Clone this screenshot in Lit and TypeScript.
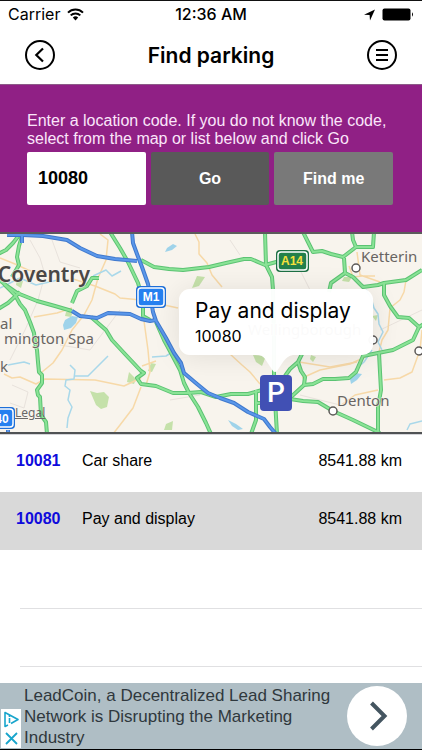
import { LitElement, html, svg, css } from "lit";
import { customElement, state } from "lit/decorators.js";
import { classMap } from "lit/directives/class-map.js";

interface Place {
  code: string;
  name: string;
  distance: string;
}

const PLACES: Place[] = [
  { code: "10081", name: "Car share", distance: "8541.88 km" },
  { code: "10080", name: "Pay and display", distance: "8541.88 km" },
];

const A_ROADS = [
  "M20 234L13 243L6 250L-2 254",
  "M22 236L19 246L17 257L19 265L12 277",
  "M-2 279L7 286L17 293L37 301L55 306L72 311",
  "M-2 309L8 303L20 292",
  "M4 284L15 295L20 304L25 310L30 322L34 333L35 343L37 350L38 362L39 372L42 375L42 383L37 390L38 395L40 397L41 415L46 422L47 434",
  "M72 303L77 291L87 286L92 278L99 278",
  "M91 317L106 330L112 340L125 354L141 371L144 373L137 378L141 384L156 386L173 393L188 393L201 392L216 397L231 394L248 394L262 390",
  "M110 232L120 248L128 262L138 283L143 300L143 316L150 320",
  "M156 322L164 340L171 353L180 370L184 383L189 393L198 407L206 423L211 434",
  "M141 260L154 267L169 269L183 270L209 267L226 263L244 259L251 259L265 265L280 261",
  "M265 232L266 265L272 277L273 290L274 340L274 380L276 417L277 434",
  "M256 390L256 420L251 434",
  "M256 403H266",
  "M303 232L308 242L313 252L322 251L331 254L343 257L356 247L373 247L374 232",
  "M352 232L353 240L356 247",
  "M344 258L345 273L331 283L329 292",
  "M345 273L353 277L363 287L378 285L384 283L406 280L422 270",
  "M384 283L384 295L390 306L398 317L409 318L419 327L424 324",
  "M419 327L413 340L405 344L393 350L378 353L363 356L356 372L349 378L335 379L323 379L313 384L304 385L291 397",
  "M379 353L380 372L381 390L378 407L378 434",
  "M290 399L303 401L318 402L333 411L353 420L380 433",
  "M285 376L290 369L298 362L302 354",
  "M298 362L301 371L305 377L304 385",
];

const MOTORWAYS = [
  "M7 235L23 235L43 236L67 240L80 248L97 256L115 259L137 261",
  "M22 233V243",
  "M132 232L133 243L137 254L142 267L148 284L151 300L153 312L156 321L166 338L174 353L181 363L184 373L197 384L208 393L220 398L234 403L248 412L264 419L270 427L276 434",
  "M72 311L80 316L97 318L108 313L130 314L141 319L150 321L156 320",
  "M8 430V434",
];

const B_ROADS = [
  "M100 234L108 240L106 260L98 278L92 300L84 315L72 330L62 350L53 363L42 372",
  "M70 278L95 286L115 294L120 298L141 300L178 308",
  "M34 317L57 313L72 308",
  "M4 374L12 378L20 377L36 384L45 379L95 380L124 386L141 378",
  "M113 434L120 425L133 408L141 387",
  "M195 234L199 242L199 254L207 263L212 275L222 287",
  "M144 321L148 350L150 372L146 385M142 366L156 361",
  "M230 354L242 365L250 372L260 384",
  "M349 266L353 277L362 276L375 276M357 252L360 275L380 282",
  "M406 280L404 292L400 300L390 308L388 330L382 340L379 352",
  "M302 378L320 370L350 364L372 354",
  "M299 362L330 367L357 362",
  "M422 330L420 350L412 372L400 378L384 380",
  "M340 406L355 395L378 390",
  "M0 258L15 264L28 270L45 275",
];

const RIVERS = [
  "M0 288L8 284L20 278L36 285L58 280",
  "M93 276L106 270L112 276L121 271",
  "M8 365L24 362L30 364",
  "M70 365L75 370L74 379L66 380L65 386L70 390L68 400L72 407L68 418L67 428",
  "M75 376L88 376L96 368L108 356",
  "M152 357L166 356L174 351",
  "M366 290L371 298L374 308L378 314L379 324L383 332L378 342L382 350",
  "M372 350L364 362L355 370",
  "M407 430L410 424L422 421",
];

@customElement("app-root")
export class AppRoot extends LitElement {
  @state() private selected = "10080";

  static styles = css`
    :host {
      display: flex;
      flex-direction: column;
      box-sizing: border-box;
      min-height: 100vh;
      background: #fff;
      border-top: 1px solid #111;
      border-bottom: 1px solid #000;
      font-family: "Liberation Sans", Arial, sans-serif;
      font-size: 16px;
      color: #000;
    }
    svg {
      display: block;
    }
    button {
      border: 0;
      padding: 0;
      font: inherit;
      background: none;
      color: inherit;
    }
    .status {
      display: grid;
      grid-template-columns: 1fr auto 1fr;
      align-items: center;
      height: 27px;
      padding: 0 8px;
      font: 500 16px/27px Inter, "Liberation Sans", sans-serif;
    }
    .carrier,
    .power {
      display: flex;
      align-items: center;
      gap: 7px;
    }
    .carrier {
      font-weight: 400;
    }
    .power {
      justify-content: flex-end;
    }
    .bar {
      display: flex;
      align-items: center;
      justify-content: space-between;
      height: 56px;
      padding: 0 24px;
      border-bottom: 1px solid #8d5a88;
    }
    h1 {
      margin: 0;
      font: 600 21px/28px Inter, "Liberation Sans", sans-serif;
    }
    .finder {
      padding: 27px 29px 27px 27px;
      background: #902085;
      color: #fbe6fa;
    }
    .finder label {
      display: block;
      margin-bottom: 4px;
      line-height: 18px;
    }
    .fields {
      display: grid;
      grid-template-columns: repeat(3, 1fr);
      gap: 5px;
    }
    .fields > * {
      box-sizing: border-box;
      width: 100%;
      height: 53px;
      border: 0;
      border-radius: 2px;
      font: bold 16px/20px "Liberation Sans", Arial, sans-serif;
      color: #fff;
    }
    .fields .code {
      padding: 0 11px;
      font-size: 18px;
      background: #fff;
      color: #000;
    }
    .go {
      background: #595959;
    }
    .near {
      background: #797979;
    }
    .map {
      position: relative;
      height: 198px;
      border-top: 2px solid #5c5c5c;
      border-bottom: 2px solid #505254;
      background: #f8f4ed;
    }
    .chart {
      width: 100%;
      height: 100%;
    }
    .case {
      stroke: #5cc373;
      stroke-width: 4;
    }
    .road {
      stroke: #8ae396;
      stroke-width: 2;
    }
    .mcase {
      stroke: #4079cd;
      stroke-width: 4;
    }
    .motor {
      stroke: #5a97ea;
      stroke-width: 2;
    }
    .minor {
      stroke: #f7d9a8;
      stroke-width: 1.5;
    }
    .lane {
      stroke: #e8e2dc;
      stroke-width: 1;
    }
    .river {
      stroke: #a9d8ea;
      stroke-width: 1.5;
    }
    .lines {
      fill: none;
      stroke-linejoin: round;
    }
    .city,
    .town {
      font-family: "Noto Sans", "Open Sans", sans-serif;
      fill: #686462;
      stroke: #f8f4ed;
      stroke-width: 1;
      paint-order: stroke;
    }
    .city {
      font-size: 21px;
      font-weight: 600;
      fill: #4a4746;
    }
    .town {
      font-size: 15px;
    }
    .shield {
      font: bold 12px "Liberation Sans", sans-serif;
      fill: #fff;
      text-anchor: middle;
    }
    .gold {
      fill: #f6e13c;
    }
    .cut {
      text-anchor: end;
    }
    .legal {
      position: absolute;
      left: 15px;
      bottom: 12px;
      font: 12px/14px "Noto Sans", sans-serif;
      color: #6b6867;
    }
    .callout {
      position: absolute;
      left: 65.4%;
      top: 55px;
      box-sizing: border-box;
      width: 194px;
      padding: 8px 16px;
      border-radius: 11px;
      transform: translateX(-50%);
      background: #fffffff7;
      box-shadow: 0 2px 28px #00000018;
      font-family: Inter, "Liberation Sans", sans-serif;
      white-space: nowrap;
    }
    .title {
      font-size: 21px;
      line-height: 28px;
    }
    .sub {
      font-size: 16px;
      line-height: 22px;
    }
    .tail {
      position: absolute;
      top: 100%;
      left: 50%;
      transform: translateX(-50%);
    }
    .pin {
      position: absolute;
      left: 65.4%;
      top: 141px;
      width: 32px;
      height: 36px;
      border-radius: 4px;
      transform: translateX(-50%);
      background: #4150b4;
      color: #fff;
      text-align: center;
      font: 500 28px/36px Roboto, sans-serif;
    }
    table {
      width: 100%;
      border-collapse: collapse;
      border-top: 1px solid #d4d4d8;
      table-layout: fixed;
    }
    tr {
      height: 58px;
    }
    tr.first {
      height: 57px;
    }
    td {
      padding: 0 0 4px;
    }
    td.id {
      width: 66px;
      padding-left: 16px;
      font-weight: bold;
    }
    td.far {
      padding-right: 20px;
      text-align: right;
    }
    .id a {
      color: #0f0bdc;
      text-decoration: none;
    }
    .chosen {
      background: #d9d9d9;
    }
    .empty {
      flex: 1;
      overflow: hidden;
      margin-left: 20px;
    }
    .slot {
      box-sizing: border-box;
      height: 58px;
      border-bottom: 1px solid #e0e0e2;
    }
    .slot.head {
      height: 59px;
    }
    .ad {
      position: relative;
      display: flex;
      align-items: center;
      justify-content: space-between;
      gap: 8px;
      height: 66px;
      padding: 0 15px 0 24px;
      background: #afbec5;
    }
    .pitch {
      color: #2f383d;
      font-size: 17px;
      line-height: 21px;
      text-decoration: none;
      max-width: 312px;
    }
    .open {
      flex: none;
    }
    .choices {
      position: absolute;
      left: 1px;
      bottom: 1px;
      background: #fff;
    }
    .choices button {
      display: block;
    }
  `;

  private paths(list: string[], name: string) {
    return list.map((d) => svg`<path class=${name} d=${d} />`);
  }

  private renderMap() {
    return html`<svg class="chart" viewBox="0 234 422 198" preserveAspectRatio="xMidYMid slice" aria-hidden="true">
      <g fill="#c5e1aa">
        <path d="M90 391L97 393L104 392L109 397L107 407L101 409L96 405Z" />
        <path d="M129 372L136 379L134 384L127 382Z" />
        <path d="M197 276L205 277L199 286L192 288Z" />
        <path d="M166 424L173 421L172 430L164 430Z" />
        <path d="M151 363L156 364L152 372L148 371Z" />
        <path d="M253 355L266 356L262 366L256 362Z" />
        <path d="M344 277L352 277L349 282L342 281Z" />
        <path d="M311 355L316 357L313 362L310 359Z" />
        <path d="M17 278L23 281L21 288L16 285Z" />
        <path d="M66 312L73 312L71 317L65 316Z" />
        <path d="M372 316L378 315L376 321Z" />
      </g>
      <g fill="#9fd3ea">
        <path d="M65 320L72 316L78 317L76 323L71 328L64 330L63 325Z" />
        <path d="M167 248L173 244L177 246L172 250L165 252Z" />
        <path d="M350 379L355 373L362 374L357 380L351 384Z" />
        <path d="M228 420L236 424L243 429L238 430L232 426Z" />
      </g>
      <g class="lines">
        <path class="lane" d="M30 240L40 258L45 275L38 300L25 330L10 360M12 385L28 392L24 408L10 403M52 240L60 262L80 268M230 240L240 255M300 270L320 310M380 330L422 310M300 395L340 405M60 345L90 350L120 310M200 395L170 400" />
        ${this.paths(B_ROADS, "minor")} ${this.paths(RIVERS, "river")}
        ${this.paths(A_ROADS, "case")} ${this.paths(A_ROADS, "road")}
        ${this.paths(MOTORWAYS, "mcase")} ${this.paths(MOTORWAYS, "motor")}
      </g>
      <g fill="#fff" stroke="#5c5957" stroke-width="1.5">
        <circle cx="356" cy="268" r="4" />
        <circle cx="333" cy="411" r="4" />
        <circle cx="373" cy="340" r="4" />
        <circle cx="419" cy="351" r="4" />
      </g>
      <text class="city cut" x="90" y="282">Coventry</text>
      <text class="town" x="0" y="329">al</text>
      <text class="town cut" x="94" y="344">mington Spa</text>
      <text class="town" x="0" y="372">k</text>
      <text class="town" x="361" y="262">Ketterin</text>
      <text class="town" x="337" y="406">Denton</text>
      <text class="town" x="248" y="335">Wellingborough</text>
      <g>
        <rect x="136" y="286" width="30" height="22" rx="4" fill="#1e6fd8" />
        <rect x="138" y="288" width="26" height="18" rx="3" fill="#2580f0" stroke="#fff" stroke-width="1.5" />
        <text class="shield" x="151" y="301">M1</text>
        <rect x="-14" y="407" width="29" height="22" rx="4" fill="#1e6fd8" />
        <rect x="-12" y="409" width="25" height="18" rx="3" fill="#2580f0" stroke="#fff" stroke-width="1.5" />
        <text class="shield" x="2" y="423">40</text>
        <rect x="276" y="250" width="33" height="22" rx="4" fill="#1d7044" />
        <rect x="278" y="252" width="29" height="18" rx="3" fill="#23804b" stroke="#fff" stroke-width="1.5" />
        <text class="shield gold" x="292" y="265">A14</text>
      </g>
    </svg>`;
  }

  render() {
    return html`
      <div class="status">
        <span class="carrier">
          Carrier
          <svg width="17" height="13" viewBox="0 0 17 13" fill="none" stroke="#000" stroke-width="2">
            <path d="M1 4.6A10.6 10.6 0 0 1 16 4.6M3.7 7.4A6.8 6.8 0 0 1 13.3 7.4" />
            <path d="M8.5 12.5L5.8 9.6A3.9 3.9 0 0 1 11.2 9.6Z" fill="#000" stroke="none" />
          </svg>
        </span>
        <span>12:36 AM</span>
        <span class="power">
          <svg width="11" height="12" viewBox="0 0 11 12"><path d="M11 0.5L6 11.5L5.6 6L0 5.8Z" /></svg>
          <svg width="32" height="13" viewBox="0 0 32 13">
            <rect x="0.5" y="0.5" width="28" height="12" rx="2" />
            <path d="M30 4.3Q32 6.5 30 8.7Z" />
          </svg>
        </span>
      </div>
      <header class="bar">
        <button aria-label="Back">
          <svg width="32" height="32" viewBox="0 0 32 32" fill="none" stroke="#000" stroke-width="2">
            <circle cx="16" cy="15" r="14" />
            <path d="M19 8.500L12.300 15L19 21.500" stroke-width="2.2" />
          </svg>
        </button>
        <h1>Find parking</h1>
        <button aria-label="Menu">
          <svg width="32" height="32" viewBox="0 0 32 32" fill="none" stroke="#000" stroke-width="2">
            <circle cx="16" cy="15" r="14" />
            <path d="M10 10H22M10 15H22M10 20H22" stroke-width="2.2" />
          </svg>
        </button>
      </header>
      <section class="finder">
        <label for="code">Enter a location code. If you do not know the code, select from the map or list below and click Go</label>
        <div class="fields">
          <input id="code" class="code" type="text" .value=${this.selected} />
          <button class="go">Go</button>
          <button class="near">Find me</button>
        </div>
      </section>
      <section class="map">
        ${this.renderMap()}
        <a class="legal" href="#legal">Legal</a>
        <div class="callout">
          <div class="title">Pay and display</div>
          <div class="sub">10080</div>
          <svg class="tail" width="34" height="18" viewBox="0 0 34 18"><path d="M0 0H34Q28 1 24 7L18 16Q16 18 14 16L8 7Q5 1 0 0Z" fill="#fffffff7" /></svg>
        </div>
        <button class="pin">P</button>
      </section>
      <table>
        <tbody>
          ${PLACES.map(
            (p, i) => html`<tr class=${classMap({ first: i === 0, chosen: p.code === this.selected })} @click=${() => (this.selected = p.code)}>
              <td class="id"><a href="#${p.code}">${p.code}</a></td>
              <td>${p.name}</td>
              <td class="far">${p.distance}</td>
            </tr>`
          )}
        </tbody>
      </table>
      <div class="empty">
        <div class="slot head"></div>
        <div class="slot"></div>
      </div>
      <footer class="ad">
        <a class="pitch" href="#leadcoin">LeadCoin, a Decentralized Lead Sharing Network is Disrupting the Marketing Industry</a>
        <button class="open" aria-label="Open">
          <svg width="60" height="60" viewBox="0 0 60 60">
            <circle cx="30" cy="30" r="30" fill="#fff" />
            <path d="M24.500 17L37.500 30L24.500 43" fill="none" stroke="#445560" stroke-width="4" />
          </svg>
        </button>
        <div class="choices">
          <button aria-label="Ad choices">
            <svg width="20" height="20" viewBox="0 0 20 20" fill="none" stroke="#18a5cc" stroke-width="1.6">
              <path d="M7 16L4 17.500V3.500L17 10.500L10 14.500" stroke-linejoin="round" />
              <path d="M8.500 9V14M8.500 6V8" stroke-width="1.6" />
            </svg>
          </button>
          <button aria-label="Close ad">
            <svg width="20" height="19" viewBox="0 0 20 19" stroke="#18a5cc" stroke-width="1.8">
              <path d="M5 4L16 15M16 4L5 15" />
            </svg>
          </button>
        </div>
      </footer>
    `;
  }
}
